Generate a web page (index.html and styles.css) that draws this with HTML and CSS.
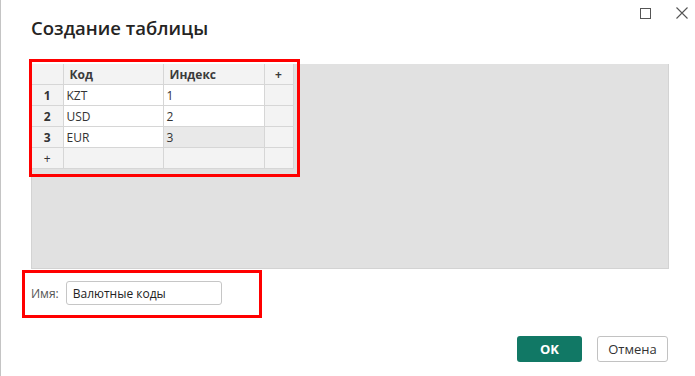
FILE: index.html
```html
<!DOCTYPE html>
<html lang="ru">
<head>
  <meta charset="UTF-8" />
  <meta name="viewport" content="width=device-width, initial-scale=1.0" />
  <title>Создание таблицы</title>
  <link rel="stylesheet" href="styles.css">
</head>
<body>
  <div class="dialog">
    <div class="window-controls">
      <span class="win-btn">
        <svg width="11" height="11" viewBox="0 0 11 11"><rect x="0.5" y="0.5" width="10" height="10" fill="none" stroke="#555" stroke-width="1"/></svg>
      </span>
      <span class="win-btn">
        <svg width="12" height="12" viewBox="0 0 12 12"><path d="M0.5 0.5 L11.5 11.5 M11.5 0.5 L0.5 11.5" stroke="#555" stroke-width="1.1" fill="none"/></svg>
      </span>
    </div>

    <h1 class="dialog-title">Создание таблицы</h1>

    <div class="grid-area">
      <table class="data-grid">
        <colgroup>
          <col class="c-row">
          <col class="c-code">
          <col class="c-index">
          <col class="c-add">
        </colgroup>
        <thead>
          <tr>
            <th class="row-head"></th>
            <th class="col-code">Код</th>
            <th class="col-index">Индекс</th>
            <th class="add-col">+</th>
          </tr>
        </thead>
        <tbody>
          <tr>
            <td class="row-head">1</td>
            <td>KZT</td>
            <td>1</td>
            <td class="add-col"></td>
          </tr>
          <tr>
            <td class="row-head">2</td>
            <td>USD</td>
            <td>2</td>
            <td class="add-col"></td>
          </tr>
          <tr>
            <td class="row-head">3</td>
            <td>EUR</td>
            <td class="selected">3</td>
            <td class="add-col"></td>
          </tr>
          <tr class="add-row">
            <td class="row-head">+</td>
            <td></td>
            <td></td>
            <td class="add-col"></td>
          </tr>
        </tbody>
      </table>
      <div class="highlight highlight-table"></div>
    </div>

    <div class="name-row">
      <label class="name-label" for="tableName">Имя:</label>
      <input type="text" id="tableName" class="name-input" value="Валютные коды" />
      <div class="highlight highlight-name"></div>
    </div>

    <div class="button-container">
      <button class="btn btn-primary">OK</button>
      <button class="btn btn-secondary">Отмена</button>
    </div>
  </div>
</body>
</html>
```

FILE: styles.css
```css
body {
  margin: 0;
  background-color: #fff;
  font-family: "Open Sans", "Noto Sans", Arial, sans-serif;
  color: #333;
}

.dialog {
  position: relative;
  width: 695px;
  height: 376px;
  box-sizing: border-box;
  border-left: 1px solid #c4c4c4;
  padding: 0 27px 0 30px;
  overflow: hidden;
}

.window-controls {
  position: absolute;
  top: 7px;
  right: 7px;
  display: flex;
  gap: 25px;
  align-items: center;
}

.win-btn {
  display: flex;
}

.dialog-title {
  margin: 0;
  padding-top: 15px;
  height: 64px;
  box-sizing: border-box;
  font-size: 18.5px;
  font-weight: 600;
  color: #252423;
  line-height: 26px;
}

.grid-area {
  position: relative;
  width: 638px;
  height: 205px;
  box-sizing: border-box;
  background-color: #e1e1e1;
  border: 1px solid #d3d3d3;
  border-top: none;
}

.data-grid {
  border-collapse: collapse;
  table-layout: fixed;
  width: 261px;
  background-color: #f3f3f3;
  font-size: 12px;
}

.c-row { width: 31px; }
.c-code { width: 100px; }
.c-index { width: 101px; }
.c-add { width: 29px; }

.data-grid th,
.data-grid td {
  height: 20px;
  padding: 0 4px;
  border: 1px solid #d6d6d6;
  text-align: left;
  color: #333;
  white-space: nowrap;
  overflow: hidden;
  line-height: 19px;
}

.data-grid th {
  font-weight: 700;
  color: #3b3b3b;
  background-color: #f3f3f3;
}

.data-grid th:first-child,
.data-grid td:first-child {
  border-left: none;
}

.data-grid thead th {
  border-top: none;
}

.data-grid td {
  background-color: #fff;
}

.data-grid .row-head {
  text-align: center;
  font-weight: 700;
  background-color: #f3f3f3;
}

.data-grid .col-code,
.data-grid .col-index {
  padding-left: 6px;
}

.data-grid tbody td:nth-child(2),
.data-grid tbody td:nth-child(3) {
  padding-left: 3px;
}

.data-grid .add-col {
  text-align: center;
  background-color: #f3f3f3;
}

.data-grid .add-row td {
  background-color: #f3f3f3;
  font-weight: 400;
}

.data-grid .selected {
  background-color: #e9e9e9;
}

.highlight {
  position: absolute;
  border: 3px solid #ff0000;
  pointer-events: none;
}

.highlight-table {
  left: -3px;
  top: -5px;
  width: 265px;
  height: 112px;
}

.name-row {
  position: relative;
  display: flex;
  align-items: center;
  gap: 7px;
  margin-top: 12px;
  height: 24px;
}

.name-label {
  font-size: 12px;
  color: #555;
}

.name-input {
  width: 156px;
  height: 24px;
  box-sizing: border-box;
  padding: 0 6px;
  border: 1px solid #c6c6c6;
  border-radius: 3px;
  font-family: inherit;
  font-size: 12px;
  color: #222;
}

.highlight-name {
  left: -9px;
  top: -11px;
  width: 234px;
  height: 42px;
}

.button-container {
  display: flex;
  justify-content: flex-end;
  gap: 15px;
  margin-top: 31px;
}

.btn {
  height: 26px;
  box-sizing: border-box;
  border-radius: 3px;
  font-family: inherit;
  font-size: 13px;
  cursor: pointer;
}

.btn-primary {
  width: 65px;
  background-color: #117865;
  border: none;
  color: #fff;
  font-weight: 700;
}

.btn-secondary {
  width: 71px;
  background-color: #fff;
  border: 1px solid #c2c2c2;
  color: #333;
}
```
